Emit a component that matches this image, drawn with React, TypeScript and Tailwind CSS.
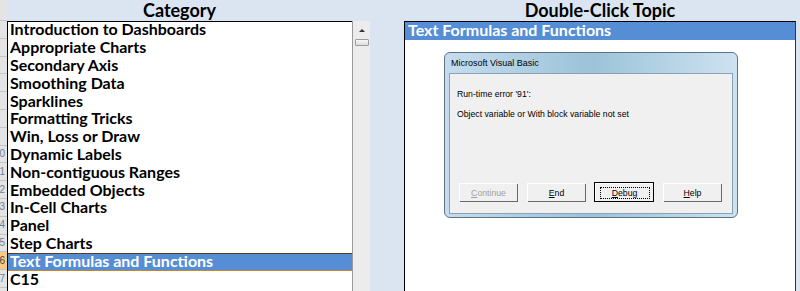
import React from "react";

const items = [
  "Introduction to Dashboards",
  "Appropriate Charts",
  "Secondary Axis",
  "Smoothing Data",
  "Sparklines",
  "Formatting Tricks",
  "Win, Loss or Draw",
  "Dynamic Labels",
  "Non-contiguous Ranges",
  "Embedded Objects",
  "In-Cell Charts",
  "Panel",
  "Step Charts",
  "Text Formulas and Functions",
  "C15",
];
const SEL = 13;

function Btn({ children, disabled, def }: { children: React.ReactNode; disabled?: boolean; def?: boolean }) {
  return (
    <div
      className={
        "w-[58px] h-[18px] flex items-center justify-center bg-[#f0f0f0] border-t border-l border-t-white border-l-white shadow-[1px_1px_0_#696969] " +
        (def ? "outline outline-1 outline-black " : "") +
        (disabled ? "text-[#a0a0a0]" : "text-black")
      }
    >
      <div className={"flex items-center justify-center " + (def ? "border border-dotted border-black w-[50px] h-[12px]" : "")}>
        {children}
      </div>
    </div>
  );
}

export default function App() {
  const rowH = "h-[17.8px]";
  return (
    <div
      className="w-[800px] h-[291px] bg-[#dbe5f1] flex overflow-hidden"
      style={{ fontFamily: "Lato, 'Open Sans', sans-serif" }}
    >
      {/* row headers */}
      <div className="w-[7px] flex flex-col bg-[#e4e4e4] shrink-0 overflow-hidden">
        <div className="h-[21px] border-b border-[#c5c5c5]" />
        {items.map((_, i) => (
          <div
            key={i}
            className={
              rowH +
              " border-b border-[#c5c5c5] overflow-hidden flex items-center text-[10px] leading-none " +
              (i === SEL ? "bg-[#f8cb84] text-[#444]" : "text-[#6d7f9a]")
            }
            style={{ fontFamily: "'Liberation Sans', sans-serif" }}
          >
            <div className="w-[20px] ml-[-15px] text-right shrink-0">{i + 3 >= 10 ? i + 3 : ""}</div>
          </div>
        ))}
      </div>

      {/* list column */}
      <div className="w-[345px] flex flex-col shrink-0">
        <div className="h-[21px] flex items-center justify-center font-bold text-[18px] text-black leading-none pb-[2px]">
          Category
        </div>
        <div className="flex-1 bg-white border-l border-t border-black flex flex-col">
          {items.map((t, i) => (
            <div
              key={t}
              className={
                rowH +
                " flex items-center pl-[2px] pb-[3px] font-bold text-[16px] leading-none " +
                (i === SEL
                  ? "bg-[#558ed5] text-white border-t border-t-[#5a3e1a] border-b border-b-[#c8852c]"
                  : "text-black")
              }
            >
              {t}
            </div>
          ))}
        </div>
      </div>

      {/* scrollbar */}
      <div className="w-[18px] flex flex-col shrink-0">
        <div className="h-[21px]" />
        <div className="flex-1 border-l border-[#9a9a9a] bg-[#ececec] flex flex-col items-center">
          <div className="h-[18px] flex items-center justify-center">
            <div className="w-0 h-0 border-l-[3px] border-r-[3px] border-b-[3px] border-l-transparent border-r-transparent border-b-[#333]" />
          </div>
          <div className="w-[14px] h-[7px] border border-[#9c9c9c] rounded-[1px] bg-gradient-to-b from-[#f8f8f8] to-[#dcdcdc]" />
        </div>
      </div>

      <div className="w-[34px] shrink-0" />

      {/* right column */}
      <div className="w-[392px] flex flex-col shrink-0">
        <div className="h-[21px] flex items-center justify-center font-bold text-[18px] text-black leading-none pb-[2px]">
          Double-Click Topic
        </div>
        <div className="flex-1 bg-white border-l border-t border-r border-l-black border-t-black border-r-[#333] flex flex-col">
          <div className="h-[18px] bg-[#558ed5] text-white font-bold text-[16px] leading-none flex items-center pl-[3px] pb-[2px]">
            Text Formulas and Functions
          </div>
          {/* dialog */}
          <div
            className="ml-[39px] mt-[12px] w-[294px] h-[166px] rounded-[6px] border border-[#5e7286] bg-gradient-to-r from-[#c6dcee] via-[#9cc3d9] to-[#cde2f0] flex flex-col px-[4px] pb-[3px]"
            style={{ fontFamily: "'Liberation Sans', Arial, sans-serif" }}
          >
            <div className="h-[20px] flex items-center pl-[2px] text-[9px] text-black leading-none">
              Microsoft Visual Basic
            </div>
            <div className="flex-1 bg-[#f0f0f0] border border-[#8aa1b8] flex flex-col pl-[7px] text-[8.7px] text-black leading-none">
              <div className="mt-[16px]">Run-time error '91':</div>
              <div className="mt-[11px]">Object variable or With block variable not set</div>
              <div className="mt-[65px] ml-[2px] flex gap-[10px]">
                <Btn disabled>
                  <span><span className="underline">C</span>ontinue</span>
                </Btn>
                <Btn>
                  <span><span className="underline">E</span>nd</span>
                </Btn>
                <Btn def>
                  <span><span className="underline">D</span>ebug</span>
                </Btn>
                <Btn>
                  <span><span className="underline">H</span>elp</span>
                </Btn>
              </div>
            </div>
          </div>
        </div>
      </div>
    </div>
  );
}
